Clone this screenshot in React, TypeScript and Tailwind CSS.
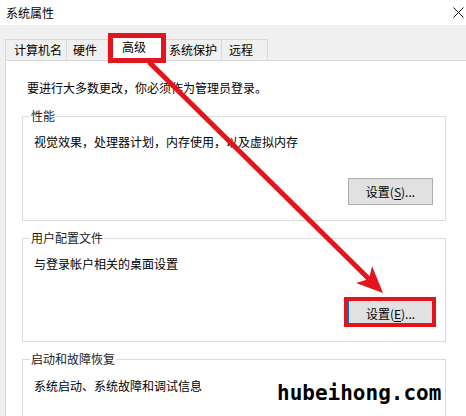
const font = "font-['Microsoft_YaHei','Noto_Sans_CJK_SC',sans-serif]";

function Tab({ label, w, pl, active }: { label: string; w: number; pl: number; active?: boolean }) {
  if (active) {
    return (
      <div
        className="relative z-10 -mb-px flex h-[26px] items-center border border-b-0 border-[#d9d9d9] bg-white"
        style={{ width: w, paddingLeft: pl }}
      >
        <span className="-mt-[3px]">{label}</span>
        {/* red highlight */}
        <div className="absolute -left-[1px] -top-[3px] h-[30px] w-[58px] border-[5px] border-[#e3141b]" />
      </div>
    );
  }
  return (
    <div
      className="flex h-[21px] items-center border border-b-0 border-l-0 border-[#d9d9d9] bg-[#f0f0f0] first:border-l"
      style={{ width: w, paddingLeft: pl }}
    >
      {label}
    </div>
  );
}

function SettingsButton({ hotkey }: { hotkey: string }) {
  return (
    <div className="flex h-[27px] w-[85px] items-center justify-center border border-[#adadad] bg-[#e1e1e1] text-[12px]">
      设置(<span className="underline underline-offset-2">{hotkey}</span>)...
    </div>
  );
}

function Group({
  title,
  desc,
  mt,
  h,
  descMt,
  children,
}: {
  title: string;
  desc: string;
  mt: number;
  h: number;
  descMt: number;
  children?: React.ReactNode;
}) {
  return (
    <fieldset className="w-[424px] border border-[#dcdcdc]" style={{ marginTop: mt, height: h }}>
      <legend className="ml-[7px] px-[1px] leading-[16px] text-[#222]">{title}</legend>
      <div className="pl-[11px] leading-[16px]" style={{ marginTop: descMt }}>
        {desc}
      </div>
      {children}
    </fieldset>
  );
}

export default function App() {
  return (
    <div className={`relative h-[416px] w-[466px] overflow-hidden bg-[#f0f0f0] text-[12px] text-black ${font}`}>
      {/* title bar */}
      <div className="flex h-[25px] items-center justify-between bg-white pl-[6px] pr-[1px]">
        <span>系统属性</span>
        <svg width="11" height="11" viewBox="0 0 11 11" className="mr-[1px]">
          <path d="M0.5 0.5 L10.5 10.5 M10.5 0.5 L0.5 10.5" stroke="#111" strokeWidth="1" />
        </svg>
      </div>

      <div className="pl-[5px]">
        {/* tabs */}
        <div className="flex h-[35px] items-end">
          <Tab label="计算机名" w={62} pl={8} />
          <Tab label="硬件" w={41} pl={6} />
          <Tab label="高级" w={57} pl={13} active />
          <Tab label="系统保护" w={57} pl={4} />
          <Tab label="远程" w={46} pl={7} />
        </div>

        {/* panel */}
        <div className="h-[400px] w-[470px] border border-[#d9d9d9] bg-white pl-[16px] pt-[19px]">
          <div className="pl-[5px] leading-[16px]">要进行大多数更改，你必须作为管理员登录。</div>

          <Group title="性能" desc="视觉效果，处理器计划，内存使用，以及虚拟内存" mt={12} h={113} descMt={10}>
            <div className="mt-[28px] flex justify-end pr-[12px]">
              <SettingsButton hotkey="S" />
            </div>
          </Group>

          <Group title="用户配置文件" desc="与登录帐户相关的桌面设置" mt={9} h={112} descMt={10}>
            <div className="mt-[28px] flex justify-end pr-[12px]">
              <div className="relative">
                <div className="flex h-[27px] w-[85px] items-center justify-center border border-[#0078d7] bg-[#e1e1e1] text-[12px]">
                  设置(<span className="underline underline-offset-2">E</span>)...
                </div>
                <div className="absolute -left-[4px] -top-[3px] h-[30px] w-[92px] border-4 border-[#e3141b]" />
              </div>
            </div>
          </Group>

          <Group title="启动和故障恢复" desc="系统启动、系统故障和调试信息" mt={9} h={120} descMt={11} />
        </div>
      </div>

      {/* arrow */}
      <svg className="pointer-events-none absolute left-0 top-0" width="466" height="416" viewBox="0 0 466 416">
        <line x1="149" y1="62" x2="369" y2="279" stroke="#e3141b" strokeWidth="5" />
        <polygon points="383,293 356,283 369,279 372,266" fill="#e3141b" />
      </svg>

      {/* watermark */}
      <div className="absolute left-[277px] top-[383px] font-['DejaVu_Sans_Mono',monospace] text-[21px] font-bold leading-none text-black">
        hubeihong.com
      </div>
    </div>
  );
}
